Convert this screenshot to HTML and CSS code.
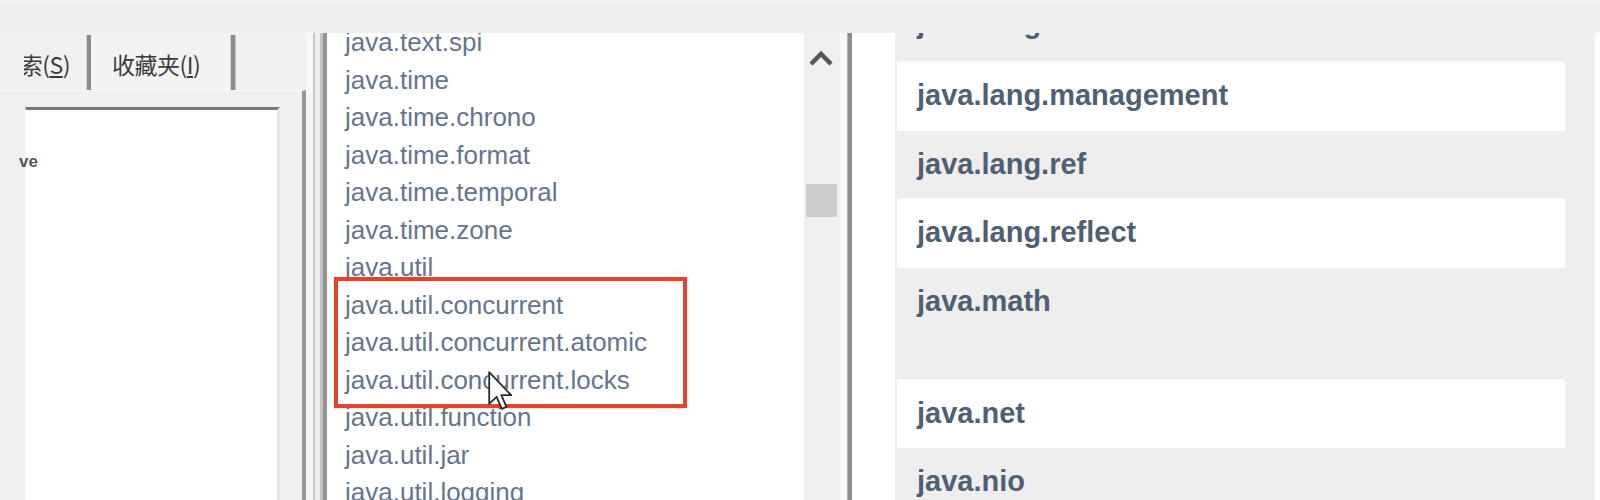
FILE: index.html
```html
<!DOCTYPE html>
<html lang="zh">
<head>
<meta charset="utf-8">
<title>Java API</title>
<link rel="stylesheet" href="styles.css">
</head>
<body>
<div class="topbar"></div>
<div class="main">
  <div class="left">
    <div class="tabs">
      <div class="tab tab-cut"><span class="tab-label">搜索(<u>S</u>)</span></div>
      <div class="tab-sep"></div>
      <div class="tab tab-fav"><span class="tab-label">收藏夹(<u>I</u>)</span></div>
      <div class="tab-sep"></div>
    </div>
    <div class="tabpanel">
      <div class="tree"><span class="tree-item">ve</span></div>
    </div>
  </div>
  <div class="splitter"></div>
  <div class="mid">
    <ul class="pkglist">
      <li>java.text.spi</li>
      <li>java.time</li>
      <li>java.time.chrono</li>
      <li>java.time.format</li>
      <li>java.time.temporal</li>
      <li>java.time.zone</li>
      <li>java.util</li>
      <li>java.util.concurrent</li>
      <li>java.util.concurrent.atomic</li>
      <li>java.util.concurrent.locks</li>
      <li>java.util.function</li>
      <li>java.util.jar</li>
      <li>java.util.logging</li>
    </ul>
    <div class="annot"></div>
    <svg class="cursor" width="26" height="40" viewBox="0 0 13 20">
      <path d="M0.6 0.6 L0.6 16.4 L4.3 12.9 L6.9 18.9 L9.2 17.9 L6.7 12.1 L11.6 12.1 Z" fill="#ffffff" stroke="#2a2a2a" stroke-width="0.9" stroke-linejoin="round"/>
    </svg>
  </div>
  <div class="vscroll">
    <svg class="chev" width="26" height="18" viewBox="0 0 26 18">
      <path d="M3 15 L13 5 L23 15" fill="none" stroke="#555555" stroke-width="4.5" stroke-linecap="butt" stroke-linejoin="miter"/>
    </svg>
    <div class="thumb"></div>
  </div>
  <div class="gap"></div>
  <div class="divider"></div>
  <div class="whitegap"></div>
  <div class="right">
    <div class="row row-cut">java.lang.invoke</div>
    <div class="row row-alt">java.lang.management</div>
    <div class="row">java.lang.ref</div>
    <div class="row row-alt">java.lang.reflect</div>
    <div class="row row-tall">java.math</div>
    <div class="row row-alt">java.net</div>
    <div class="row">java.nio</div>
  </div>
  <div class="edge"></div>
</div>
</body>
</html>
```

FILE: styles.css
```css
html, body {
  margin: 0;
  padding: 0;
}
body {
  width: 1600px;
  height: 500px;
  overflow: hidden;
  background: #f0f0f0;
  font-family: "Liberation Sans", Arial, sans-serif;
}
.topbar {
  height: 33px;
  background: #efefef;
  border-top: 3px solid #f5f5f5;
  box-sizing: border-box;
}
.main {
  display: flex;
  height: 467px;
}

/* left help panel */
.left {
  width: 306px;
  flex: none;
  display: flex;
  flex-direction: column;
  background: #f0f0f0;
}
.tabs {
  height: 57px;
  display: flex;
  align-items: stretch;
  flex: none;
}
.tab {
  display: flex;
  align-items: center;
  padding-top: 5px;
  box-sizing: border-box;
  font-family: "Noto Sans CJK SC", "Liberation Sans", sans-serif;
  font-size: 23px;
  letter-spacing: -0.5px;
  color: #3c3c3c;
  white-space: nowrap;
}
.tab-cut {
  width: 63px;
  margin-left: 24px;
  overflow: hidden;
  justify-content: flex-end;
  padding-right: 17px;
}
.tab-fav {
  width: 140px;
  padding-left: 21px;
  background: #f3f3f3;
}
.tab-label u {
  text-decoration-thickness: 2px;
  text-underline-offset: 2px;
}
.tab-sep {
  width: 4px;
  margin-top: 2px;
  background: #8c8c8c;
  box-shadow: 1px 0 0 #c8c8c8, -1px 0 0 #d0d0d0;
}
.tabpanel {
  flex: 1;
  border-right: 4px solid #969696;
  border-top: 1px solid #f8f8f8;
  padding: 16px 0 0 25px;
}
.tree {
  width: 255px;
  height: 100%;
  background: #ffffff;
  border-top: 3px solid #777777;
  border-right: 3px solid #e6e6e6;
  border-left: 1px solid #f7f7f7;
  padding-top: 42px;
  box-sizing: border-box;
}
.tree-item {
  display: block;
  margin-left: -7px;
  font-size: 17px;
  line-height: 20px;
  font-weight: bold;
  color: #555555;
}

/* splitter between panes */
.splitter {
  width: 17px;
  flex: none;
  background: linear-gradient(to right,
    #f6f6f6 0, #f6f6f6 7px,
    #c9c9c9 7px, #c9c9c9 9px,
    #efefef 9px, #efefef 14px,
    #c2c2c2 14px, #c2c2c2 17px);
}

/* package list */
.mid {
  width: 477px;
  flex: none;
  position: relative;
  overflow: hidden;
  background: #ffffff;
  border-left: 4px solid #939393;
}
.pkglist {
  list-style: none;
  margin: -9px 0 0 0;
  padding: 0 0 0 18px;
}
.pkglist li {
  font-size: 26px;
  line-height: 37.5px;
  height: 37.5px;
  color: #66758c;
  white-space: nowrap;
}
.annot {
  position: absolute;
  left: 7px;
  top: 244px;
  width: 353px;
  height: 131px;
  box-sizing: border-box;
  border: 4px solid #e6402e;
  box-shadow: 0 0 1px rgba(230, 64, 46, 0.5);
}
.cursor {
  position: absolute;
  left: 161px;
  top: 338px;
}

/* scrollbar */
.vscroll {
  width: 36px;
  flex: none;
  background: #f0f0f0;
  display: flex;
  flex-direction: column;
  align-items: flex-start;
}
.chev {
  margin: 16px 0 0 4px;
  display: block;
}
.thumb {
  width: 31px;
  height: 33px;
  margin: 117px 0 0 2px;
  background: #cdcdcd;
}
.gap {
  width: 7px;
  flex: none;
  background: #f7f7f7;
}
.divider {
  width: 5px;
  flex: none;
  background: #8d8d8d;
  box-shadow: inset 1px 0 0 #b0b0b0;
}
.whitegap {
  width: 43px;
  flex: none;
  background: #ffffff;
}

/* right overview table */
.right {
  width: 700px;
  flex: none;
  overflow: hidden;
  background: #eeeeee;
}
.row {
  width: 648px;
  height: 68.5px;
  margin-left: 2px;
  padding-left: 20px;
  font-size: 29px;
  font-weight: bold;
  line-height: 66px;
  color: #4f5f74;
  background: #eeeeee;
  white-space: nowrap;
}
.row-alt {
  background: #ffffff;
  box-shadow: 0 -1px 0 #f8f8f8;
}
.row-cut {
  margin-top: -43px;
  height: 72px;
}
.row-tall {
  height: 112px;
}
.edge {
  flex: 1;
  background: #fcfcfc;
}
```
